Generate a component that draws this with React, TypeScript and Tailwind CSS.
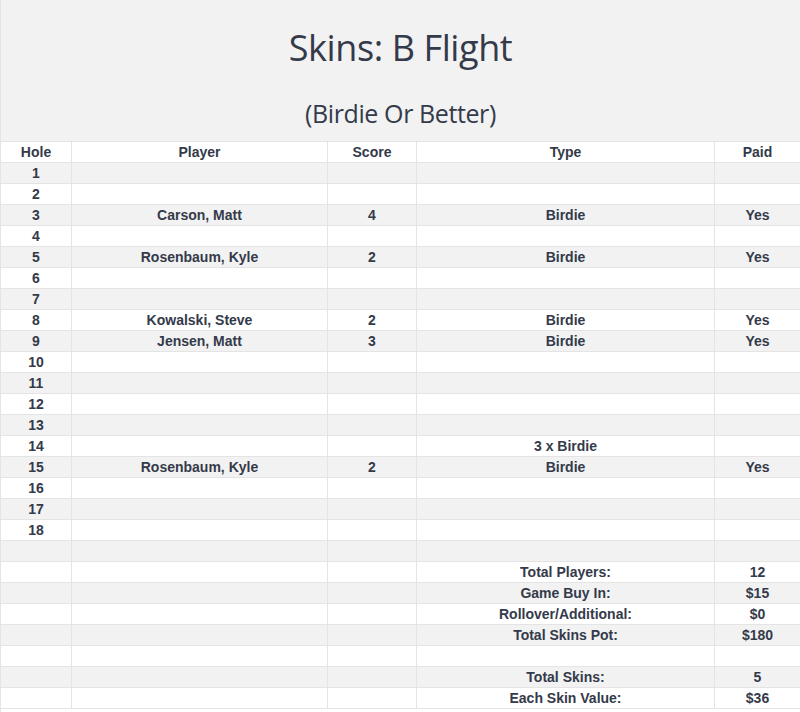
const holes: { hole: number; player?: string; score?: string; type?: string; paid?: string }[] = [
  { hole: 1 },
  { hole: 2 },
  { hole: 3, player: 'Carson, Matt', score: '4', type: 'Birdie', paid: 'Yes' },
  { hole: 4 },
  { hole: 5, player: 'Rosenbaum, Kyle', score: '2', type: 'Birdie', paid: 'Yes' },
  { hole: 6 },
  { hole: 7 },
  { hole: 8, player: 'Kowalski, Steve', score: '2', type: 'Birdie', paid: 'Yes' },
  { hole: 9, player: 'Jensen, Matt', score: '3', type: 'Birdie', paid: 'Yes' },
  { hole: 10 },
  { hole: 11 },
  { hole: 12 },
  { hole: 13 },
  { hole: 14, type: '3 x Birdie' },
  { hole: 15, player: 'Rosenbaum, Kyle', score: '2', type: 'Birdie', paid: 'Yes' },
  { hole: 16 },
  { hole: 17 },
  { hole: 18 },
];

const summary: [string, string][] = [
  ['', ''],
  ['Total Players:', '12'],
  ['Game Buy In:', '$15'],
  ['Rollover/Additional:', '$0'],
  ['Total Skins Pot:', '$180'],
  ['', ''],
  ['Total Skins:', '5'],
  ['Each Skin Value:', '$36'],
];

const cols = 'grid grid-cols-[71px_256px_89px_298px_85px]';
const cell = 'h-[20px] flex items-center justify-center border-r border-[#e4e4e4] last:border-r-0 leading-none';

function Row({ cells, gray }: { cells: (string | number | undefined)[]; gray: boolean }) {
  return (
    <div className={`${cols} border-b border-[#e4e4e4] ${gray ? 'bg-[#f2f2f2]' : 'bg-white'}`}>
      {cells.map((c, i) => (
        <div key={i} className={cell}>
          {c ?? ''}
        </div>
      ))}
    </div>
  );
}

export default function App() {
  const rows: (string | number | undefined)[][] = [
    ...holes.map((h) => [h.hole, h.player, h.score, h.type, h.paid]),
    ...summary.map(([label, value]) => ['', '', '', label, value]),
  ];

  return (
    <div className="w-[800px] min-h-[712px] bg-white border-l border-[#e4e4e4] text-[#343a4a]">
      <div className="h-[142px] bg-[#f2f2f2] border-b border-[#e4e4e4] flex flex-col items-center font-['Open_Sans',sans-serif]">
        <h1 className="mt-[24px] text-[36px] leading-[48px] font-normal tracking-[-0.4px]">Skins: B Flight</h1>
        <p className="mt-[24px] text-[25px] leading-[34px] tracking-[-0.4px]">(Birdie Or Better)</p>
      </div>
      <div className="font-['Liberation_Sans',sans-serif] font-bold text-[14px]">
        <Row cells={['Hole', 'Player', 'Score', 'Type', 'Paid']} gray={false} />
        {rows.map((r, i) => (
          <Row key={i} cells={r} gray={i % 2 === 0} />
        ))}
      </div>
    </div>
  );
}
